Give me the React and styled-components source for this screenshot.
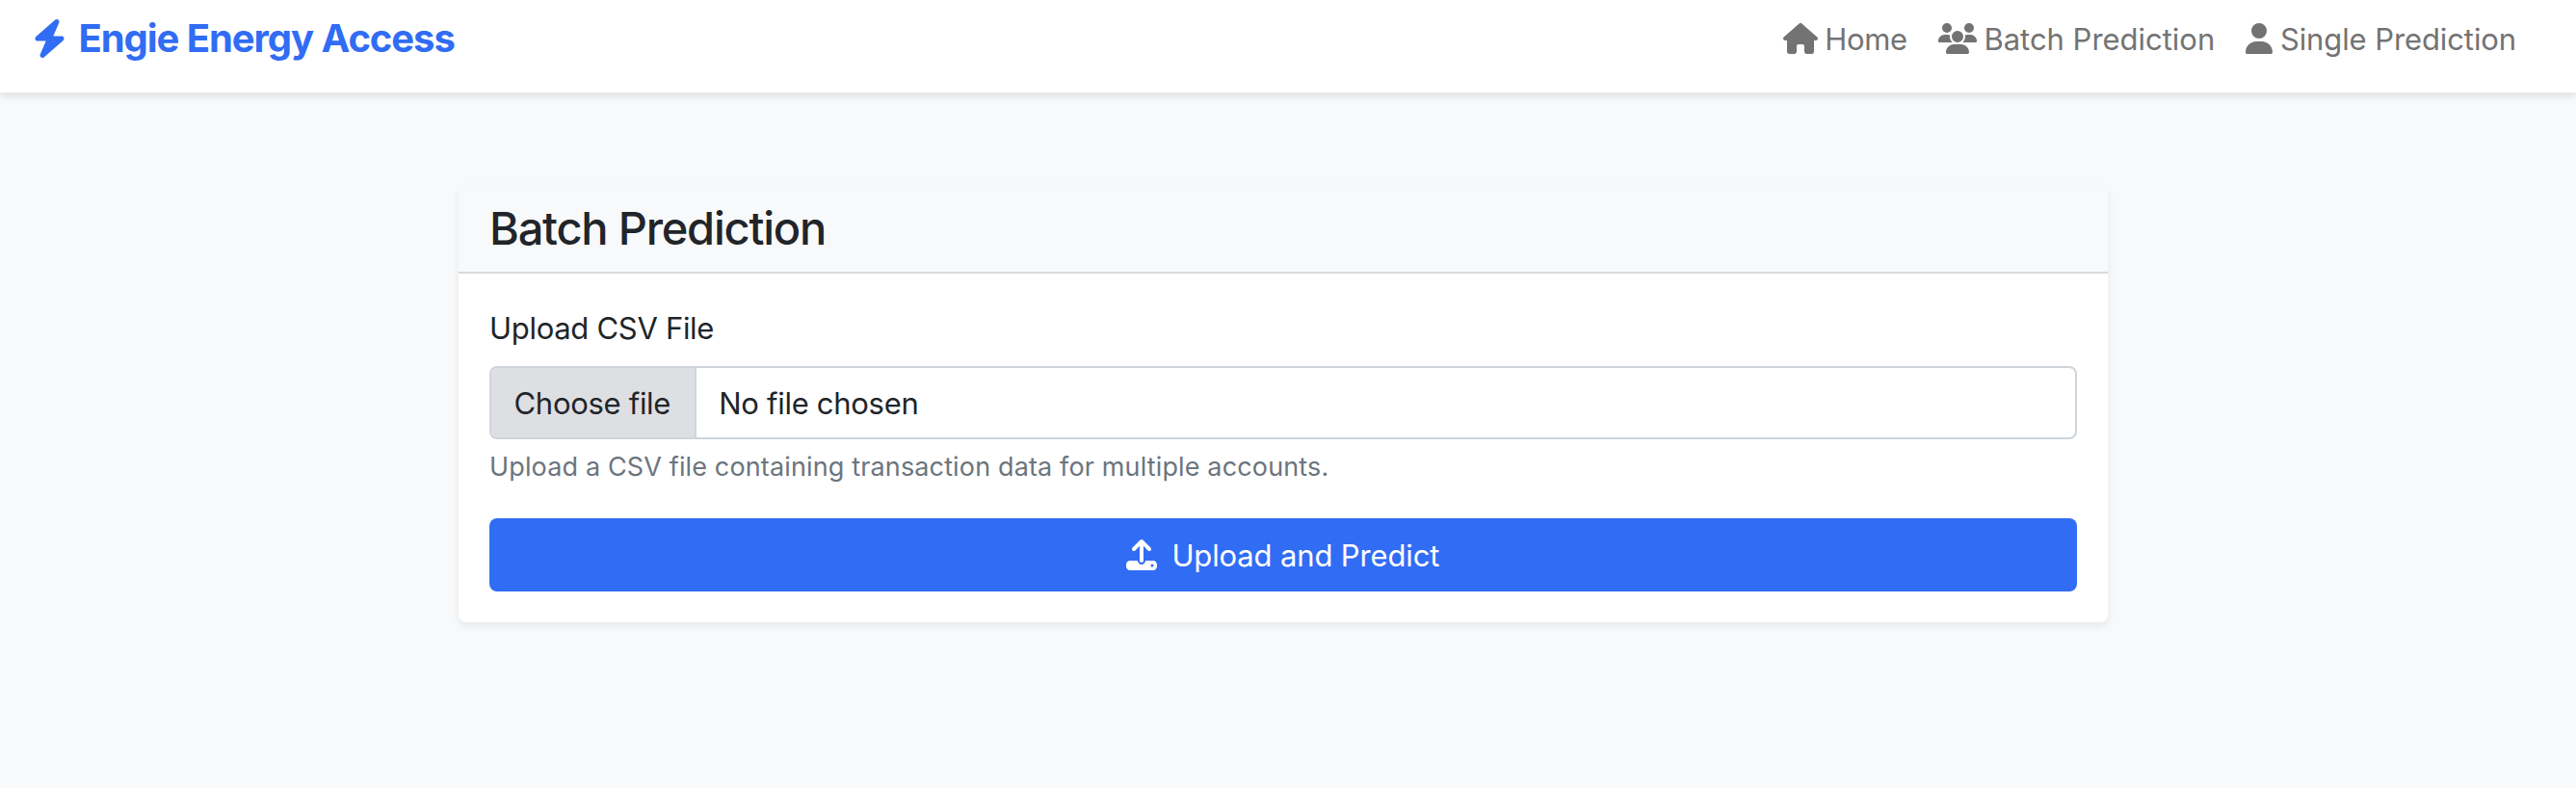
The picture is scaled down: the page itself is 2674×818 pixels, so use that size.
import React from "react";
import styled, { createGlobalStyle } from "styled-components";
import { FaBolt, FaHouse, FaUsers, FaUser, FaUpload } from "react-icons/fa6";

const GlobalStyle = createGlobalStyle`
  *, *::before, *::after { box-sizing: border-box; }
  body {
    margin: 0;
    background: #f8f9fb;
    color: #212529;
    font-family: Inter, "Liberation Sans", sans-serif;
    font-size: 31px;
    line-height: 48px;
  }
`;

const Page = styled.div`
  min-height: 100vh;
`;

const Navbar = styled.header`
  display: flex;
  justify-content: space-between;
  align-items: center;
  height: 96px;
  padding: 0 62px 16px 33.5px;
  background: #fff;
  box-shadow: 0 4px 8px rgba(0, 0, 0, 0.1);
`;

const Brand = styled.a`
  display: flex;
  align-items: center;
  gap: 13px;
  color: #316cf4;
  font-size: 40px;
  font-weight: 700;
  letter-spacing: -1.06px;
  white-space: nowrap;
`;

const Nav = styled.nav`
  display: flex;
  align-items: center;
  gap: 31.9px;
`;

const NavLink = styled.a`
  display: flex;
  align-items: center;
  gap: 7.8px;
  color: #737373;
  letter-spacing: ${(p) => p.$spacing};
  white-space: nowrap;
`;

const NavText = styled.span`
  padding-top: 1px;
  line-height: 47px;
`;

const Icon = styled.span`
  display: flex;
  flex: none;
  width: ${(p) => p.$width}px;
  height: ${(p) => p.$height || 32}px;

  svg {
    width: 100%;
    height: 100%;
  }
`;

const Card = styled.main`
  width: 1712px;
  margin: 96px 0 0 476px;
  background: #fff;
  border-radius: 8px;
  box-shadow: 0 4px 8px rgba(0, 0, 0, 0.075);
`;

const CardHeader = styled.div`
  display: flex;
  align-items: center;
  height: 92px;
  padding: 0 32px;
  background: #f8f9fb;
  border-bottom: 2px solid #d9d9d9;
  border-radius: 8px 8px 0 0;
`;

const Title = styled.h1`
  margin: 0;
  font-size: 47px;
  font-weight: 500;
  line-height: 58px;
  letter-spacing: -1.22px;
`;

const CardBody = styled.form`
  display: flex;
  flex-direction: column;
  padding: 32px;
`;

const Label = styled.label`
  padding-top: 1px;
  margin-bottom: 15px;
  letter-spacing: -0.3px;
`;

const FileField = styled.div`
  display: flex;
  height: 76px;
  overflow: hidden;
  border: 2px solid #ced4da;
  border-radius: 8px;
  background: #fff;
  letter-spacing: -0.3px;
`;

const ChooseButton = styled.span`
  display: flex;
  align-items: center;
  width: 213px;
  padding: 1px 0 0 23.5px;
  background: #dedfe3;
  border-right: 2px solid #ced4da;
`;

const FileName = styled.span`
  display: flex;
  align-items: center;
  padding: 1px 0 0 23.3px;
`;

const HelpText = styled.div`
  margin-top: 8px;
  color: #6c757d;
  font-size: 27px;
  line-height: 42px;
  letter-spacing: 0.14px;
`;

const SubmitButton = styled.button`
  display: flex;
  align-items: center;
  justify-content: center;
  gap: 15.6px;
  height: 76px;
  margin-top: 32px;
  padding: 0 1px 0 0;
  border: 0;
  border-radius: 8px;
  background: #316cf4;
  color: #fff;
  font: inherit;
  letter-spacing: -0.14px;
`;

const SubmitText = styled.span`
  padding-top: 1px;
  line-height: 47px;
`;

export default function App() {
  return (
    <Page>
      <GlobalStyle />
      <Navbar>
        <Brand>
          <Icon $width={35} $height={40}><FaBolt /></Icon>
          Engie Energy Access
        </Brand>
        <Nav>
          <NavLink $spacing="-0.36px">
            <Icon $width={36}><FaHouse /></Icon>
            <NavText>Home</NavText>
          </NavLink>
          <NavLink $spacing="-0.02px">
            <Icon $width={40}><FaUsers /></Icon>
            <NavText>Batch Prediction</NavText>
          </NavLink>
          <NavLink $spacing="-0.1px">
            <Icon $width={28}><FaUser /></Icon>
            <NavText>Single Prediction</NavText>
          </NavLink>
        </Nav>
      </Navbar>
      <Card>
        <CardHeader>
          <Title>Batch Prediction</Title>
        </CardHeader>
        <CardBody>
          <Label>Upload CSV File</Label>
          <FileField>
            <ChooseButton>Choose file</ChooseButton>
            <FileName>No file chosen</FileName>
          </FileField>
          <HelpText>Upload a CSV file containing transaction data for multiple accounts.</HelpText>
          <SubmitButton type="button">
            <Icon $width={32}><FaUpload /></Icon>
            <SubmitText>Upload and Predict</SubmitText>
          </SubmitButton>
        </CardBody>
      </Card>
    </Page>
  );
}
